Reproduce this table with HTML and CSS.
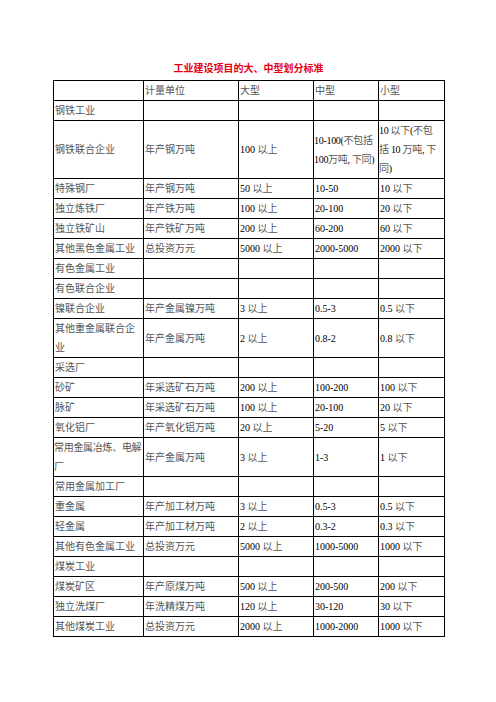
FILE: index.html
```html
<!DOCTYPE html>
<html lang="zh">
<head>
<meta charset="utf-8">
<title>工业建设项目的大、中型划分标准</title>
<link rel="stylesheet" href="styles.css">
</head>
<body>
<div class="page">
  <h1 class="title">工业建设项目的大、中型划分标准</h1>
  <table class="grid">
    <colgroup><col class="c1"><col class="c2"><col class="c3"><col class="c4"><col class="c5"></colgroup>
    <tr><td></td><td>计量单位</td><td>大型</td><td>中型</td><td>小型</td></tr>
    <tr><td>钢铁工业</td><td></td><td></td><td></td><td></td></tr>
    <tr><td>钢铁联合企业</td><td>年产钢万吨</td><td><span class="n">100</span> 以上</td><td class="tight"><span class="n">10-100(</span>不包括<br><span class="n">100</span>万吨<span class="n">, </span>下同<span class="n">)</span></td><td class="tight"><span class="n">10</span> 以下<span class="n">(</span>不包<br>括 <span class="n">10</span> 万吨<span class="n">, </span>下<br>同<span class="n">)</span></td></tr>
    <tr><td>特殊钢厂</td><td>年产钢万吨</td><td><span class="n">50</span> 以上</td><td><span class="n">10-50</span></td><td><span class="n">10</span> 以下</td></tr>
    <tr><td>独立炼铁厂</td><td>年产铁万吨</td><td><span class="n">100</span> 以上</td><td><span class="n">20-100</span></td><td><span class="n">20</span> 以下</td></tr>
    <tr><td>独立铁矿山</td><td>年产铁矿万吨</td><td><span class="n">200</span> 以上</td><td><span class="n">60-200</span></td><td><span class="n">60</span> 以下</td></tr>
    <tr><td>其他黑色金属工业</td><td>总投资万元</td><td><span class="n">5000</span> 以上</td><td><span class="n">2000-5000</span></td><td><span class="n">2000</span> 以下</td></tr>
    <tr><td>有色金属工业</td><td></td><td></td><td></td><td></td></tr>
    <tr><td>有色联合企业</td><td></td><td></td><td></td><td></td></tr>
    <tr><td>镍联合企业</td><td>年产金属镍万吨</td><td><span class="n">3</span> 以上</td><td><span class="n">0.5-3</span></td><td><span class="n">0.5</span> 以下</td></tr>
    <tr><td>其他重金属联合企<br>业</td><td>年产金属万吨</td><td><span class="n">2</span> 以上</td><td><span class="n">0.8-2</span></td><td><span class="n">0.8</span> 以下</td></tr>
    <tr><td>采选厂</td><td></td><td></td><td></td><td></td></tr>
    <tr><td>砂矿</td><td>年采选矿石万吨</td><td><span class="n">200</span> 以上</td><td><span class="n">100-200</span></td><td><span class="n">100</span> 以下</td></tr>
    <tr><td>脉矿</td><td>年采选矿石万吨</td><td><span class="n">100</span> 以上</td><td><span class="n">20-100</span></td><td><span class="n">20</span> 以下</td></tr>
    <tr><td>氧化铝厂</td><td>年产氧化铝万吨</td><td><span class="n">20</span> 以上</td><td><span class="n">5-20</span></td><td><span class="n">5</span> 以下</td></tr>
    <tr><td class="tight">常用金属冶炼、电解<br>厂</td><td>年产金属万吨</td><td><span class="n">3</span> 以上</td><td><span class="n">1-3</span></td><td><span class="n">1</span> 以下</td></tr>
    <tr><td>常用金属加工厂</td><td></td><td></td><td></td><td></td></tr>
    <tr><td>重金属</td><td>年产加工材万吨</td><td><span class="n">3</span> 以上</td><td><span class="n">0.5-3</span></td><td><span class="n">0.5</span> 以下</td></tr>
    <tr><td>轻金属</td><td>年产加工材万吨</td><td><span class="n">2</span> 以上</td><td><span class="n">0.3-2</span></td><td><span class="n">0.3</span> 以下</td></tr>
    <tr><td>其他有色金属工业</td><td>总投资万元</td><td><span class="n">5000</span> 以上</td><td><span class="n">1000-5000</span></td><td><span class="n">1000</span> 以下</td></tr>
    <tr><td>煤炭工业</td><td></td><td></td><td></td><td></td></tr>
    <tr><td>煤炭矿区</td><td>年产原煤万吨</td><td><span class="n">500</span> 以上</td><td><span class="n">200-500</span></td><td><span class="n">200</span> 以下</td></tr>
    <tr><td>独立洗煤厂</td><td>年洗精煤万吨</td><td><span class="n">120</span> 以上</td><td><span class="n">30-120</span></td><td><span class="n">30</span> 以下</td></tr>
    <tr><td>其他煤炭工业</td><td>总投资万元</td><td><span class="n">2000</span> 以上</td><td><span class="n">1000-2000</span></td><td><span class="n">1000</span> 以下</td></tr>
  </table>
</div>
</body>
</html>
```

FILE: styles.css
```css
html, body {
  margin: 0;
  padding: 0;
  background: #ffffff;
}

.page {
  width: 391px;
  margin-left: 53px;
  padding-top: 60px;
}

.title {
  margin: 0 0 4px 0;
  height: 16px;
  line-height: 16px;
  text-align: center;
  font-family: "Noto Sans CJK SC", sans-serif;
  font-weight: 700;
  font-size: 10px;
  color: #e60012;
}

.grid {
  border-collapse: collapse;
  table-layout: fixed;
  width: 391px;
  font-family: "Liberation Serif", "Noto Sans CJK SC", serif;
  font-size: 10px;
  color: #555555;
}

.c1 { width: 90px; }
.c2 { width: 95px; }
.c3 { width: 75px; }
.c4 { width: 65px; }
.c5 { width: 66px; }

.grid td {
  border: 1px solid #000000;
  padding: 0 0 0 1px;
  height: 19px;
  line-height: 19px;
  vertical-align: middle;
  white-space: nowrap;
  overflow: hidden;
}

.grid td.tight {
  padding-left: 0;
  letter-spacing: -0.3px;
}

.n {
  color: #000000;
}
```
